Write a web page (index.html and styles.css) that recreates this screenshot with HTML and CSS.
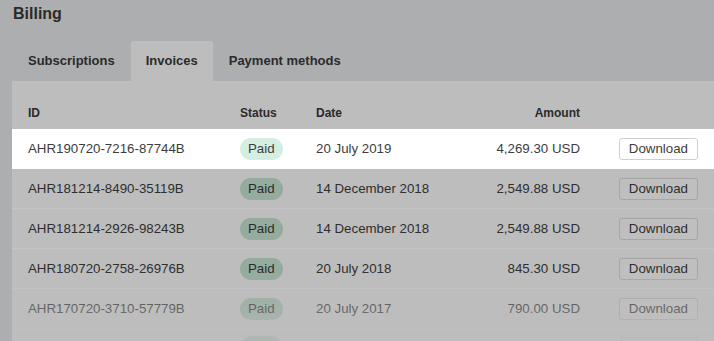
FILE: index.html
```html
<!DOCTYPE html>
<html lang="en">
<head>
  <meta charset="UTF-8" />
  <meta name="viewport" content="width=device-width, initial-scale=1.0" />
  <title>Billing</title>
  <link rel="stylesheet" href="styles.css">
</head>
<body>
  <div class="page">
    <h1 class="title">Billing</h1>

    <div class="tabs">
      <span class="tab">Subscriptions</span>
      <span class="tab tab-active">Invoices</span>
      <span class="tab">Payment methods</span>
    </div>

    <div class="panel">
      <div class="row row-head">
        <div>ID</div>
        <div>Status</div>
        <div>Date</div>
        <div class="amount">Amount</div>
        <div></div>
      </div>

      <div class="row row-focus">
        <div>AHR190720-7216-87744B</div>
        <div><span class="badge">Paid</span></div>
        <div>20 July 2019</div>
        <div class="amount">4,269.30 USD</div>
        <div class="action"><button class="btn">Download</button></div>
      </div>

      <div class="row">
        <div>AHR181214-8490-35119B</div>
        <div><span class="badge">Paid</span></div>
        <div>14 December 2018</div>
        <div class="amount">2,549.88 USD</div>
        <div class="action"><button class="btn">Download</button></div>
      </div>

      <div class="row">
        <div>AHR181214-2926-98243B</div>
        <div><span class="badge">Paid</span></div>
        <div>14 December 2018</div>
        <div class="amount">2,549.88 USD</div>
        <div class="action"><button class="btn">Download</button></div>
      </div>

      <div class="row">
        <div>AHR180720-2758-26976B</div>
        <div><span class="badge">Paid</span></div>
        <div>20 July 2018</div>
        <div class="amount">845.30 USD</div>
        <div class="action"><button class="btn">Download</button></div>
      </div>

      <div class="row">
        <div>AHR170720-3710-57779B</div>
        <div><span class="badge">Paid</span></div>
        <div>20 July 2017</div>
        <div class="amount">790.00 USD</div>
        <div class="action"><button class="btn">Download</button></div>
      </div>

      <!-- next row only peeks in at the bottom edge -->
      <div class="row row-peek">
        <div></div>
        <div><span class="badge"></span></div>
        <div></div>
        <div></div>
        <div class="action"><span class="btn btn-empty"></span></div>
      </div>
    </div>

    <div class="fade"></div>
  </div>
</body>
</html>
```

FILE: styles.css
```css
html, body {
  margin: 0;
  height: 100%;
}

body {
  font-family: "Liberation Sans", Arial, sans-serif;
  background-color: #adaeb0;
  color: #2d2d2d;
  overflow: hidden;
}

.page {
  position: relative;
  height: 100vh;
  padding-left: 12px;
  overflow: hidden;
}

.title {
  margin: 0;
  padding-left: 1px;
  font-size: 16px;
  font-weight: bold;
  line-height: 28px;
  color: #2a2a2a;
}

.tabs {
  display: flex;
  gap: 1px;
  margin-top: 13px;
  padding-left: 1px;
}

.tab {
  padding: 0 15px;
  line-height: 40px;
  font-size: 13px;
  font-weight: bold;
  color: #2b2b2b;
  border-top-left-radius: 3px;
  border-top-right-radius: 3px;
}

.tab-active {
  background-color: #bdbdbd;
}

.panel {
  background-color: #bdbdbd;
}

.row {
  display: grid;
  grid-template-columns: 212px 76px 144px 120px 1fr;
  align-items: center;
  height: 40px;
  padding: 0 16px;
  box-sizing: border-box;
  border-bottom: 1px solid #c4c4c4;
  font-size: 13.3px;
  color: #2e2e2e;
}

.row-head {
  height: 48px;
  padding-top: 16px;
  border-bottom: none;
  font-size: 12px;
  font-weight: bold;
  color: #2a2a2a;
}

.row-focus {
  background-color: #ffffff;
  color: #3d3d3d;
  border-bottom-color: #ffffff;
}

.amount {
  text-align: right;
}

.action {
  display: flex;
  justify-content: flex-end;
}

.badge {
  display: inline-block;
  padding: 0 8px;
  height: 22px;
  line-height: 22px;
  border-radius: 11px;
  background-color: #94ab9d;
  color: #2b2b2b;
}

.row-focus .badge {
  background-color: #d4eee1;
  color: #3d3d3d;
}

.btn {
  font-family: inherit;
  font-size: 13.3px;
  height: 22px;
  padding: 0 9px;
  background-color: #bfbfbf;
  border: 1px solid #a6a6a6;
  border-radius: 3px;
  color: #2e2e2e;
}

.row-focus .btn {
  background-color: #ffffff;
  border-color: #cfcfcf;
  color: #3d3d3d;
}

.row-peek .badge {
  width: 26px;
}

.btn-empty {
  display: block;
  width: 57px;
  box-sizing: content-box;
  height: 20px;
}

.fade {
  position: absolute;
  left: 12px;
  right: 0;
  bottom: 0;
  height: 72px;
  background: linear-gradient(to bottom, rgba(189, 189, 189, 0), rgba(189, 189, 189, 0.72));
  pointer-events: none;
}
```
